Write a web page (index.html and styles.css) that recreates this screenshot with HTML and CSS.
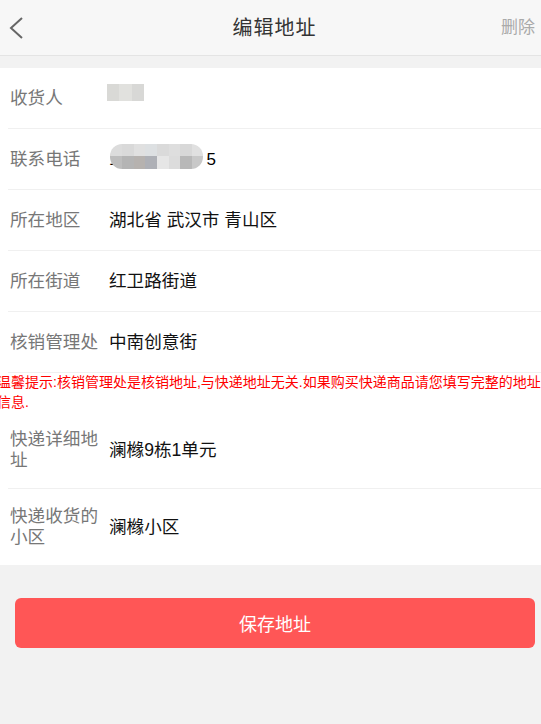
FILE: index.html
```html
<!DOCTYPE html>
<html lang="zh-CN">
<head>
<meta charset="utf-8">
<title>编辑地址</title>
<link rel="stylesheet" href="styles.css">
</head>
<body>
<header class="topbar">
  <span class="back">
    <svg width="16" height="24" viewBox="0 0 16 24"><path d="M13 2 L2 12 L13 22" fill="none" stroke="#666" stroke-width="2"/></svg>
  </span>
  <h1 class="title">编辑地址</h1>
  <span class="del">删除</span>
</header>

<section class="form">
  <div class="row">
    <div class="label">收货人</div>
    <div class="value">
      <span class="blur-name"><i class="b1"></i><i class="b2"></i><i class="b3"></i></span>
    </div>
  </div>
  <div class="row">
    <div class="label">联系电话</div>
    <div class="value phone">
      <span class="digit">1</span>
      <span class="blur-pill">
        <i style="background:#dcdcdc"></i><i style="background:#d9d9d9"></i><i style="background:#e0e0e0"></i><i style="background:#dde0e2"></i><i style="background:#dadada"></i><i style="background:#dedede"></i><i style="background:#d8d8d8"></i><i style="background:#e0e0e0"></i>
        <i style="background:#bdbdbd"></i><i style="background:#b4b4b4"></i><i style="background:#b6b2af"></i><i style="background:#aeb0b6"></i><i style="background:#e6e6e6"></i><i style="background:#dcdcdc"></i><i style="background:#b8b8b8"></i><i style="background:#c8c8c8"></i>
      </span>
      <span class="digit">5</span>
    </div>
  </div>
  <div class="row">
    <div class="label">所在地区</div>
    <div class="value">湖北省 武汉市 青山区</div>
  </div>
  <div class="row">
    <div class="label">所在街道</div>
    <div class="value">红卫路街道</div>
  </div>
  <div class="row">
    <div class="label">核销管理处</div>
    <div class="value">中南创意街</div>
  </div>
  <p class="notice">温馨提示:核销管理处是核销地址,与快递地址无关.如果购买快递商品请您填写完整的地址信息.</p>
  <div class="row tall">
    <div class="label">快递详细地址</div>
    <div class="value">澜橼9栋1单元</div>
  </div>
  <div class="row tall last">
    <div class="label">快递收货的小区</div>
    <div class="value">澜橼小区</div>
  </div>
</section>

<div class="actions">
  <button class="save">保存地址</button>
</div>
</body>
</html>
```

FILE: styles.css
```css
html, body {
  margin: 0;
  padding: 0;
}
body {
  width: 541px;
  min-height: 724px;
  background: #f2f2f2;
  font-family: "Liberation Sans", "Noto Sans CJK SC", sans-serif;
  overflow: hidden;
}
.topbar {
  height: 55px;
  background: #f7f7f7;
  border-bottom: 1px solid #e4e4e4;
  display: flex;
  align-items: center;
  justify-content: space-between;
  padding: 0 6px 0 9px;
  position: relative;
}
.back {
  display: flex;
  width: 16px;
  height: 24px;
  margin-top: 1px;
}
.title {
  margin: 0;
  font-size: 20px;
  font-weight: normal;
  letter-spacing: 1px;
  color: #333;
  line-height: 24px;
  position: absolute;
  left: 8px;
  right: 0;
  text-align: center;
  pointer-events: none;
}
.del {
  font-size: 17px;
  color: #aaa;
  line-height: 24px;
}
.form {
  margin-top: 12px;
  background: #fff;
}
.row {
  display: flex;
  align-items: center;
  min-height: 60px;
  margin-left: 8px;
  border-bottom: 1px solid #f0f0f0;
  font-size: 17.6px;
}
.row.tall {
  padding: 17px 0;
  min-height: 0;
}
.row.last {
  border-bottom: none;
}
.label {
  width: 91px;
  padding-left: 2px;
  flex: none;
  color: #777;
  line-height: 21px;
}
.value {
  margin-left: 8px;
  color: #111;
  line-height: 21px;
  display: flex;
  align-items: center;
}
.blur-name {
  display: flex;
  margin-left: -2px;
  margin-top: -12px;
  height: 17px;
}
.blur-name i {
  display: block;
  width: 12px;
  height: 17px;
}
.blur-name .b1 { background: #d9d9d6; }
.blur-name .b2 { background: #e1e1de; width: 13px; }
.blur-name .b3 { background: #d8d8d6; }
.phone .digit {
  font-size: 17px;
  color: #000;
}
.blur-pill {
  display: grid;
  grid-template-columns: repeat(8, 1fr);
  grid-template-rows: 12px 13px;
  width: 93px;
  height: 25px;
  border-radius: 12px;
  overflow: hidden;
  margin: -5px 3px 0 -8px;
}
.blur-pill i {
  display: block;
}
.notice {
  margin: 0 0 0 -3px;
  width: 552px;
  font-size: 14px;
  line-height: 19.5px;
  color: #ff0000;
}
.actions {
  padding: 33px 6px 0 15px;
}
.save {
  display: block;
  width: 520px;
  height: 50px;
  border: none;
  border-radius: 6px;
  background: #ff5656;
  color: #fff;
  font-family: "Liberation Sans", "Noto Sans CJK SC", sans-serif;
  font-size: 18px;
  padding: 0;
}
```
